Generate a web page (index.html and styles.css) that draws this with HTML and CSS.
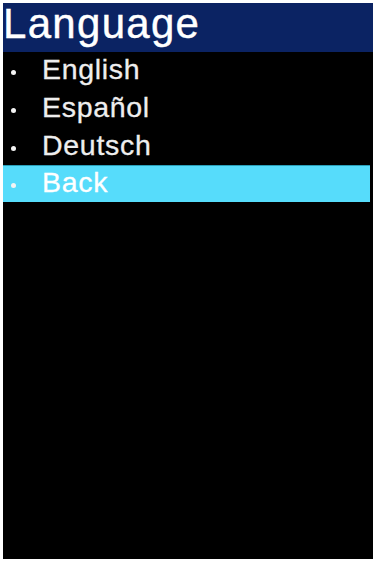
FILE: index.html
```html
<!DOCTYPE html>
<html>
<head>
<meta charset="utf-8">
<link rel="stylesheet" href="styles.css">
</head>
<body>
<div class="screen">
  <div class="header">Language</div>
  <ul class="menu">
    <li class="item"><span class="bullet"></span><span class="label">English</span></li>
    <li class="item"><span class="bullet"></span><span class="label">Español</span></li>
    <li class="item"><span class="bullet"></span><span class="label">Deutsch</span></li>
    <li class="item selected"><span class="bullet"></span><span class="label">Back</span></li>
  </ul>
</div>
</body>
</html>
```
FILE: styles.css
```css
html, body {
  margin: 0;
  padding: 0;
  background: #ffffff;
}
body {
  padding: 3px;
  font-family: "Liberation Sans", Arial, sans-serif;
}
.screen {
  width: 370px;
  height: 556px;
  background: #000000;
  display: flex;
  flex-direction: column;
}
.header {
  height: 49px;
  background: #0b2363;
  color: #ffffff;
  font-size: 42px;
  line-height: 41px;
  letter-spacing: 1.3px;
  -webkit-text-stroke: 0.4px #ffffff;
  box-sizing: border-box;
}
.menu {
  list-style: none;
  margin: 0;
  padding: 0;
  display: flex;
  flex-direction: column;
}
.item {
  height: 38px;
  display: flex;
  align-items: center;
  color: #eeeeee;
  font-size: 28.5px;
  line-height: 34px;
  letter-spacing: 0.7px;
  -webkit-text-stroke: 0.3px #eeeeee;
  box-sizing: border-box;
}
.bullet {
  width: 5px;
  height: 5px;
  border-radius: 50%;
  background: #f4f4f4;
  margin-left: 8px;
  margin-right: 26px;
  margin-top: 3px;
  flex: none;
}
.label {
  padding-bottom: 4px;
}
.selected {
  background: #56dcfb;
  color: #ffffff;
  -webkit-text-stroke: 0.3px #ffffff;
  margin-right: 3px;
  border-top: 1px solid #2a9fb8;
  height: 37px;
  margin-top: -1px;
}
```
